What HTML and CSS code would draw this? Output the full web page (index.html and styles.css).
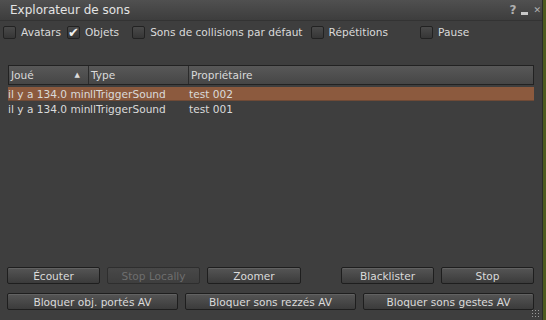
FILE: index.html
```html
<!DOCTYPE html>
<html lang="fr">
<head>
    <meta charset="UTF-8">
    <title>Explorateur de sons</title>
    <link rel="stylesheet" href="styles.css">
</head>
<body>
    <div class="floater">
        <div class="titlebar">
            <span class="title">Explorateur de sons</span>
            <div class="title-icons">
                <span class="ico-help">?</span>
                <span class="ico-min"></span>
                <span class="ico-close">&#x2715;</span>
            </div>
        </div>

        <div class="filters">
            <label class="check f-avatars"><span class="box"></span>Avatars</label>
            <label class="check f-objets"><span class="box checked">&#x2714;</span>Objets</label>
            <label class="check f-coll"><span class="box"></span>Sons de collisions par défaut</label>
            <label class="check f-rep"><span class="box"></span>Répétitions</label>
            <label class="check f-pause"><span class="box"></span>Pause</label>
        </div>

        <div class="list">
            <div class="list-head">
                <div class="col c-played">Joué <span class="sort">&#9650;</span></div>
                <div class="col c-type">Type</div>
                <div class="col c-owner">Propriétaire</div>
            </div>
            <div class="row selected">
                <div class="cell c-played">il y a 134.0 min</div>
                <div class="cell c-type">llTriggerSound</div>
                <div class="cell c-owner">test 002</div>
            </div>
            <div class="row">
                <div class="cell c-played">il y a 134.0 min</div>
                <div class="cell c-type">llTriggerSound</div>
                <div class="cell c-owner">test 001</div>
            </div>
        </div>

        <div class="btn-row">
            <button class="btn w93">Écouter</button>
            <button class="btn w93 disabled">Stop Locally</button>
            <button class="btn w94">Zoomer</button>
            <span class="spacer"></span>
            <button class="btn w93">Blacklister</button>
            <button class="btn w93">Stop</button>
        </div>
        <div class="btn-row">
            <button class="btn wide">Bloquer obj. portés AV</button>
            <button class="btn wide">Bloquer sons rezzés AV</button>
            <button class="btn wide">Bloquer sons gestes AV</button>
        </div>
        <div class="grip"></div>
    </div>
</body>
</html>
```

FILE: styles.css
```css
* {
    box-sizing: border-box;
    margin: 0;
    padding: 0;
}

body {
    font-family: 'DejaVu Sans', sans-serif;
    font-size: 10.6px;
    background-color: #4c5a1e;
    width: 546px;
    height: 320px;
    overflow: hidden;
}

.floater {
    width: 543px;
    height: 320px;
    background-color: #3e3e3e;
    border-right: 1px solid #2a2a2a;
    position: relative;
    color: #dadada;
}

.titlebar {
    height: 21px;
    display: flex;
    justify-content: space-between;
    align-items: center;
    padding: 0 1px 0 10px;
    background: linear-gradient(#505050, #3d3d3d);
    border-bottom: 1px solid #333333;
}

.title {
    font-size: 12px;
    color: #e4e4e4;
}

.title-icons {
    display: flex;
    align-items: center;
    gap: 5px;
    color: #b0b0b0;
    font-weight: bold;
}

.ico-help {
    font-size: 12px;
}

.ico-min {
    width: 7px;
    height: 3px;
    background-color: #c8c8c8;
    margin-top: 7px;
}

.ico-close {
    font-size: 9px;
    font-weight: normal;
}

.filters {
    display: flex;
    align-items: center;
    height: 20px;
    margin-top: 1px;
    padding-left: 3px;
}

.check {
    display: flex;
    align-items: center;
}

.box {
    width: 13px;
    height: 13px;
    border: 1px solid #222222;
    background: linear-gradient(#4a4a4a, #363636);
    border-radius: 2px;
    margin-right: 5px;
    display: flex;
    align-items: center;
    justify-content: center;
    color: #f0f0f0;
    font-size: 13px;
    line-height: 1;
}

.f-objets { margin-left: 6px; }
.f-coll { margin-left: 13px; }
.f-rep { margin-left: 8px; }
.f-pause { margin-left: 32px; }

.list {
    margin: 23px 8px 0 8px;
    height: 193px;
    width: 526px;
}

.list-head {
    display: flex;
    height: 20px;
    border: 1px solid #222222;
    background: linear-gradient(#585858, #464646);
}

.col {
    display: flex;
    align-items: center;
    padding-left: 2px;
    border-right: 1px solid #2b2b2b;
}

.col:last-child {
    border-right: none;
}

.c-played { width: 80px; flex-shrink: 0; }
.c-type { width: 100px; flex-shrink: 0; }
.c-owner { flex: 1; }

.list-head .c-played {
    justify-content: space-between;
    padding-right: 8px;
}

.sort {
    font-size: 7px;
    color: #dcdcdc;
}

.row {
    display: flex;
    height: 14px;
    align-items: center;
    margin-top: 1px;
}

.row.selected {
    margin-top: 2px;
    background-color: #8c5a3e;
    border-bottom: 1px solid #6f4a36;
}

.cell {
    white-space: nowrap;
}

.row .c-played { width: 82px; }
.row .c-type { width: 98px; }
.row .c-owner { padding-left: 1px; }

.btn-row {
    display: flex;
    gap: 7px;
    padding: 0 8px 0 7px;
    margin-top: 9px;
}

.btn {
    font-family: 'DejaVu Sans', sans-serif;
    font-size: 10.6px;
    height: 17px;
    color: #dadada;
    background: linear-gradient(#555555, #3b3b3b);
    border: 1px solid #1e1e1e;
    border-radius: 2px;
    box-shadow: inset 0 1px 0 #626262;
}

.btn.disabled {
    color: #6e6e6e;
    background: linear-gradient(#484848, #3e3e3e);
    box-shadow: none;
    border-color: #2e2e2e;
}

.w93 { width: 93px; }
.w94 { width: 94px; }
.spacer { flex: 1; }
.wide { flex: 1; }

.grip {
    position: absolute;
    right: 1px;
    bottom: 1px;
    width: 10px;
    height: 10px;
    background-image: radial-gradient(#9a9a9a 0.6px, transparent 0.8px);
    background-size: 3px 3px;
}
```
